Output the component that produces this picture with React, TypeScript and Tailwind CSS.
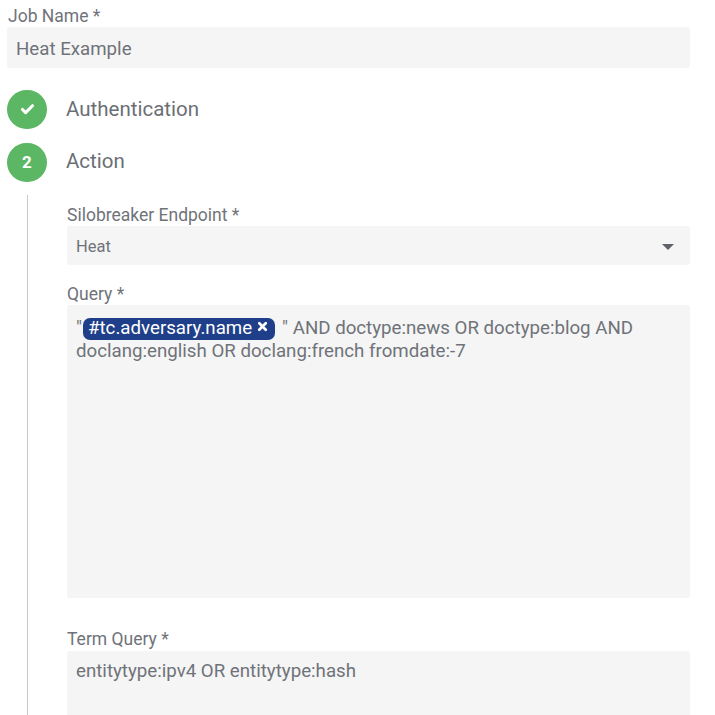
import { Check, X } from "lucide-react";

function Label({ children }: { children: React.ReactNode }) {
  return <div className="h-[19px] whitespace-nowrap text-[17.5px] leading-[19px] text-[#6f7379]">{children}</div>;
}

function StepCircle({ children }: { children: React.ReactNode }) {
  return (
    <div className="flex h-[39px] w-[40px] items-center justify-center rounded-full bg-[#5cb765] text-white">
      {children}
    </div>
  );
}

export default function App() {
  return (
    <div className="h-[715px] w-[715px] overflow-hidden bg-white pl-[7px] pr-[25px] pt-[7px] font-['Roboto',sans-serif] text-[#6f7379]">
      <div className="pl-[1px]"><Label>Job Name *</Label></div>
      <div className="mt-[1px] flex h-[41px] items-center rounded-[3px] bg-[#f5f5f5] pl-[9px] pt-[3px] text-[18.7px]">Heat Example</div>

      <div className="mt-[22px] flex h-[39px] items-center gap-[19px]">
        <StepCircle><Check size={15} strokeWidth={5} /></StepCircle>
        <div className="text-[20.5px] leading-[25px] text-[#6b6f75]">Authentication</div>
      </div>
      <div className="mt-[14px] flex h-[39px] items-center gap-[19px]">
        <StepCircle><span className="text-[17px] font-bold">2</span></StepCircle>
        <div className="-mt-[3px] text-[20.5px] leading-[25px] text-[#6b6f75]">Action</div>
      </div>

      <div className="ml-[20px] mt-[13px] h-[600px] border-l border-[#c9c9c9] pl-[39px] pt-[11px]">
        <Label>Silobreaker Endpoint *</Label>
        <div className="mt-[1px] flex h-[39px] items-center justify-between rounded-[3px] bg-[#f5f5f5] pl-[9px] pr-[16px] pt-[3px] text-[16.5px]">
          <span>Heat</span>
          <span className="h-0 w-0 border-x-[6px] border-t-[6px] border-x-transparent border-t-[#5f6368]" />
        </div>

        <div className="mt-[20px]"><Label>Query *</Label></div>
        <div className="mt-[1px] h-[293px] rounded-[3px] bg-[#f5f5f5] pl-[9px] pt-[12px] text-[18.7px] leading-[23px]">
          <div className="flex h-[23px] items-center whitespace-nowrap">
            <span>"</span>
            <span className="ml-[1px] inline-flex h-[22px] items-center rounded-[7px] bg-[#1f3f8a] pl-[5px] pr-[6px] text-white">
              #tc.adversary.name
              <X size={13} strokeWidth={5} className="mb-[4px] ml-[4px]" />
            </span>
            <span className="ml-[7px]">" AND doctype:news OR doctype:blog AND</span>
          </div>
          <div className="whitespace-nowrap">doclang:english OR doclang:french fromdate:-7</div>
        </div>

        <div className="mt-[32px]"><Label>Term Query *</Label></div>
        <div className="mt-[2px] h-[70px] rounded-[3px] bg-[#f5f5f5] pl-[9px] pt-[9px] text-[18.7px] leading-[23px]">entitytype:ipv4 OR entitytype:hash</div>
      </div>
    </div>
  );
}
